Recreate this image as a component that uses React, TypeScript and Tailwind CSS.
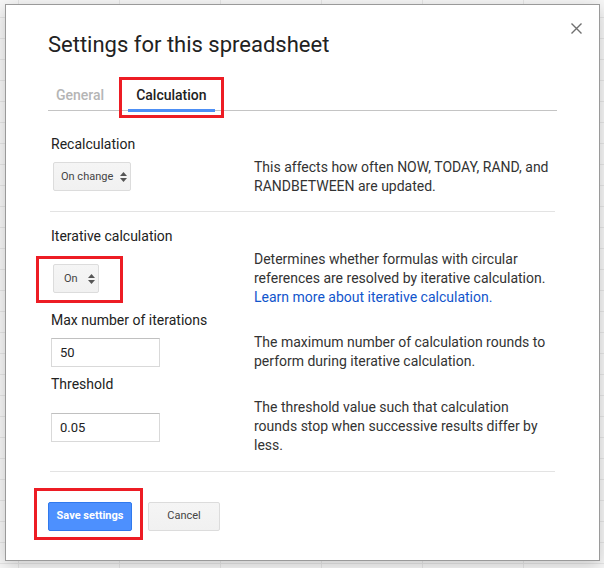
import React from "react";

function Arrows() {
  return (
    <svg width="7" height="10" viewBox="0 0 7 10" className="shrink-0">
      <path d="M0 4 L3.5 0 L7 4 Z" fill="#555" />
      <path d="M0 6 L3.5 10 L7 6 Z" fill="#555" />
    </svg>
  );
}

function RedBox({ cls }: { cls: string }) {
  return <div className={"pointer-events-none absolute border-[3px] border-[#ed1c24] " + cls} />;
}

export default function App() {
  return (
    <div className="w-[604px] h-[568px] overflow-hidden pt-[4px] pl-[5px] bg-[#f7f7f7] bg-[linear-gradient(#e6e6e6_1px,transparent_1px),linear-gradient(90deg,#e6e6e6_1px,transparent_1px)] bg-[size:101px_21px] bg-[position:18px_17px] font-['Roboto',sans-serif]">
      <div className="relative w-[595px] h-[557px] bg-white border border-[#9a9a9a] shadow-[0_4px_16px_rgba(0,0,0,0.2)] pl-[42px]">
        <div className="absolute right-[17px] top-[18px] w-[11px] h-[11px]">
          <svg width="11" height="11" viewBox="0 0 11 11">
            <path d="M0.5 0.5 L10.5 10.5 M10.5 0.5 L0.5 10.5" stroke="#6f6f6f" strokeWidth="1.4" />
          </svg>
        </div>

        <h1 className="mt-[26px] text-[22px] leading-[28px] text-[#222] font-normal whitespace-nowrap">
          Settings for this spreadsheet
        </h1>

        <div className="mt-[21px] w-[509px] flex border-b border-[#c4c4c4]">
          <div className="px-2 pt-[6px] pb-[5px] text-sm leading-[19px] font-medium text-[#b5b5b5]">
            General
          </div>
          <div className="relative ml-4 px-2 pt-[6px] pb-[5px] text-sm leading-[19px] font-medium text-[#222]">
            Calculation
            <div className="absolute left-0 right-0 bottom-[-2px] h-[3px] bg-[#4d8ff5]" />
            <RedBox cls="-left-[9px] -right-[9px] -top-[3px] -bottom-[8px]" />
          </div>
        </div>

        <div className="ml-[2px] w-[505px] text-sm leading-[19px] text-[#222]">
          <div className="mt-[24px] pl-px">Recalculation</div>
          <div className="mt-[4px] grid grid-cols-[204px_1fr]">
            <div>
              <div className="mt-[4px] ml-[3px] w-[78px] h-[29px] flex items-center pl-[7px] pr-[6px] gap-[7px] rounded-[2px] border border-[#dcdcdc] bg-[linear-gradient(#f5f5f5,#f1f1f1)] text-[11px] text-[#444] whitespace-nowrap">
                <span className="whitespace-nowrap">On change</span>
                <Arrows />
              </div>
            </div>
            <div className="text-[#333] whitespace-nowrap">
              This affects how often NOW, TODAY, RAND, and
              <br />
              RANDBETWEEN are updated.
            </div>
          </div>

          <div className="mt-[15px] h-px bg-[#e3e3e3]" />

          <div className="mt-[15px] pl-px">Iterative calculation</div>
          <div className="mt-[4px] grid grid-cols-[204px_1fr]">
            <div>
              <div className="relative mt-[14px] ml-[3px] w-[46px] h-[29px] flex items-center pl-[10px] pr-[6px] gap-[10px] rounded-[2px] border border-[#dcdcdc] bg-[linear-gradient(#f5f5f5,#f1f1f1)] text-[11px] text-[#444] whitespace-nowrap">
                <span>On</span>
                <Arrows />
                <RedBox cls="-left-[18px] -right-[25px] -top-[9px] -bottom-[11px]" />
              </div>
            </div>
            <div className="text-[#333] whitespace-nowrap">
              Determines whether formulas with circular
              <br />
              references are resolved by iterative calculation.
              <br />
              <span className="text-[#1155cc]">Learn more about iterative calculation.</span>
            </div>
          </div>

          <div className="mt-[4px] pl-px">Max number of iterations</div>
          <div className="mt-[3px] grid grid-cols-[204px_1fr]">
            <div>
              <div className="mt-[5px] ml-px w-[109px] h-[29px] flex items-center pl-[8px] border border-[#d9d9d9] border-t-[#c0c0c0] text-[13px] text-[#222]">
                50
              </div>
            </div>
            <div className="text-[#333] whitespace-nowrap">
              The maximum number of calculation rounds to
              <br />
              perform during iterative calculation.
            </div>
          </div>

          <div className="mt-[4px] pl-px">Threshold</div>
          <div className="mt-[4px] grid grid-cols-[204px_1fr]">
            <div>
              <div className="mt-[15px] ml-px w-[109px] h-[29px] flex items-center pl-[8px] border border-[#d9d9d9] border-t-[#c0c0c0] text-[13px] text-[#222]">
                0.05
              </div>
            </div>
            <div className="text-[#333] whitespace-nowrap">
              The threshold value such that calculation
              <br />
              rounds stop when successive results differ by
              <br />
              less.
            </div>
          </div>

          <div className="mt-[16px] h-px bg-[#e3e3e3]" />
        </div>

        <div className="mt-[30px] flex gap-4">
          <div className="relative w-[84px] h-[29px] flex items-center justify-center rounded-[2px] border border-[#3079ed] bg-[#4d90fe] text-[11px] font-bold text-white whitespace-nowrap">
            Save settings
            <RedBox cls="-left-[15px] -right-[12px] -top-[15px] -bottom-[10px]" />
          </div>
          <div className="w-[72px] h-[29px] flex items-center justify-center rounded-[2px] border border-[#dcdcdc] bg-[linear-gradient(#f5f5f5,#f1f1f1)] text-[11px] text-[#444]">
            Cancel
          </div>
        </div>
      </div>
    </div>
  );
}
